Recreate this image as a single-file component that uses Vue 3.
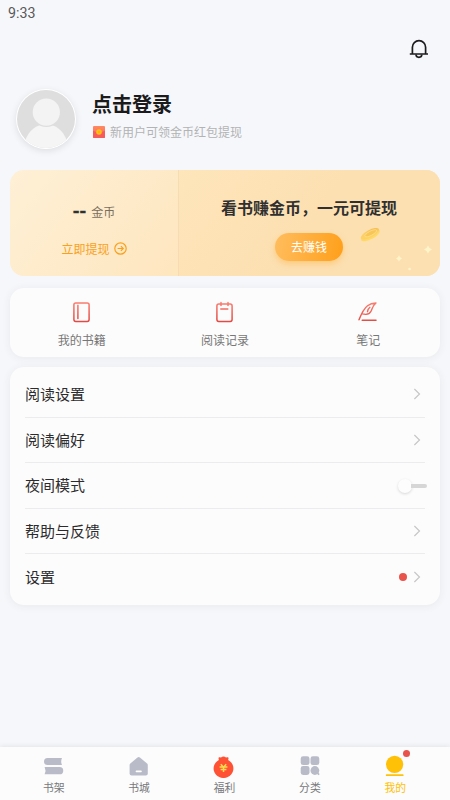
<script setup>
const shortcuts = [
  { label: '我的书籍', icon: 'book' },
  { label: '阅读记录', icon: 'record' },
  { label: '笔记', icon: 'note' },
]
const rows = [
  { label: '阅读设置' },
  { label: '阅读偏好' },
  { label: '夜间模式', toggle: true },
  { label: '帮助与反馈' },
  { label: '设置', dot: true },
]
const tabs = [
  { label: '书架', icon: 'shelf' },
  { label: '书城', icon: 'store' },
  { label: '福利', icon: 'bonus' },
  { label: '分类', icon: 'category' },
  { label: '我的', icon: 'mine', active: true },
]
</script>

<template>
  <div class="page">
    <svg class="defs" width="0" height="0">
      <defs>
        <linearGradient id="red" gradientUnits="userSpaceOnUse" x1="0" y1="0" x2="0" y2="22">
          <stop offset="0" stop-color="#fb8173" /><stop offset="1" stop-color="#e2463f" />
        </linearGradient>
        <linearGradient id="envelope" x1="0" y1="0" x2="0" y2="1">
          <stop offset="0" stop-color="#ff8a62" /><stop offset="1" stop-color="#fb5f5c" />
        </linearGradient>
        <linearGradient id="coin" x1="0" y1="1" x2="1" y2="0">
          <stop offset="0" stop-color="#ffd25c" /><stop offset="0.55" stop-color="#fbd06a" /><stop offset="1" stop-color="#f3b444" />
        </linearGradient>
      </defs>
    </svg>

    <div class="status">9:33</div>
    <div class="toolbar">
      <svg width="20" height="20" viewBox="0 0 20 20" fill="none" stroke="#1c1c1e" stroke-width="1.7">
        <path d="M3.400 15V8.300a6.600 6.600 0 0 1 13.200 0V15M.8 15h18.200" />
        <path d="M7 15.600a2.900 2.700 0 0 0 5.800 0" />
      </svg>
    </div>

    <header class="profile">
      <svg class="avatar" width="60" height="60" viewBox="0 0 60 60">
        <defs><clipPath id="face"><circle cx="30" cy="30" r="29" /></clipPath></defs>
        <circle cx="30" cy="30" r="30" fill="#fff" />
        <g clip-path="url(#face)">
          <rect width="60" height="60" fill="#dedede" />
          <path d="M9 52C13 41 20 35.5 30 35.5S47 41 51 52V60H9Z" fill="#f5f5f5" />
          <circle cx="30.3" cy="23.5" r="14.6" fill="#dedede" />
          <circle cx="30.3" cy="23.2" r="13.6" fill="#f3f3f3" />
        </g>
      </svg>
      <div class="who">
        <div class="name">点击登录</div>
        <div class="hint">
          <svg width="12" height="12" viewBox="0 0 12 12">
            <rect width="12" height="12" rx="1" fill="url(#envelope)" />
            <path d="M0 4.8Q6 8.4 12 4.8V11a1 1 0 0 1-1 1H1a1 1 0 0 1-1-1Z" fill="#f65b5a" />
            <circle cx="6" cy="6" r="2.8" fill="#ffc012" />
            <circle cx="6" cy="6" r="1.1" fill="#ffad0a" />
          </svg>
          <span>新用户可领金币红包提现</span>
        </div>
      </div>
    </header>

    <section class="coins">
      <div class="balance">
        <div class="amount"><b>--</b><span>金币</span></div>
        <div class="withdraw">
          <span>立即提现</span>
          <svg width="13" height="13" viewBox="0 0 13 13" fill="none" stroke="#f9a11d" stroke-width="1.2">
            <circle cx="6.5" cy="6.5" r="5.7" /><path d="M3.6 6.5h5.4M6.9 4.2l2.3 2.3-2.3 2.3" />
          </svg>
        </div>
      </div>
      <div class="promo">
        <div class="slogan">看书赚金币，一元可提现</div>
        <button class="earn">去赚钱</button>
        <svg class="sparkles" width="84" height="50" viewBox="0 0 84 50">
          <g transform="translate(15 9) rotate(-28)">
            <ellipse cx="-.2" cy="1.2" rx="10.5" ry="4.2" fill="#ffd966" />
            <ellipse cy="-.2" rx="10.2" ry="3.8" fill="url(#coin)" />
            <ellipse cx="1" cy="-.3" rx="6.5" ry="2.1" fill="#f8c557" stroke="#ffe294" stroke-width=".6" />
          </g>
          <g fill="#fff5c9">
            <path d="M73 20.500q1 3 4 4-3 1-4 4-1-3-4-4 3-1 4-4Z" />
            <path d="M44 30.500q.8 2.200 3 3-2.200.8-3 3-.8-2.200-3-3 2.200-.8 3-3Z" />
            <circle cx="54.6" cy="44" r="1.3" />
          </g>
        </svg>
      </div>
    </section>

    <section class="card shortcuts">
      <div v-for="s in shortcuts" :key="s.label" class="shortcut">
        <svg width="22" height="22" viewBox="0 0 22 22" fill="none" stroke="url(#red)" stroke-width="1.5" stroke-linecap="round" stroke-linejoin="round">
          <template v-if="s.icon === 'book'">
            <rect x="2.900" y="1.9" width="15.200" height="18.5" rx="1.8" />
            <path d="M6.900 4.2L6.910 17.5" />
          </template>
          <template v-else-if="s.icon === 'record'">
            <rect x="2.900" y="3.1" width="15.200" height="17.3" rx="1.8" />
            <path d="M7 1.6L7.010 4.400M14 1.6L14.010 4.400M6.800 7.9L13.800 7.910" />
          </template>
          <template v-else>
            <path d="M2 18.800C4.200 13.200 6.500 7.800 10.500 4.700C12.900 2.900 16 2.100 19 2C15.900 4.300 15.500 7.300 14 10.200C12.700 12.800 9.500 13.900 5.600 12.900M12.900 6.300C11.400 7.400 10.700 9 10.500 10.700" stroke-width="1.4" />
            <path d="M5.2 19.2L19 19.21" />
          </template>
        </svg>
        <span>{{ s.label }}</span>
      </div>
    </section>

    <section class="card list">
      <div v-for="r in rows" :key="r.label" class="row">
        <span class="label">{{ r.label }}</span>
        <span v-if="r.toggle" class="toggle"><i class="track"></i><i class="knob"></i></span>
        <span v-else class="end">
          <i v-if="r.dot" class="dot"></i>
          <svg width="8" height="12" viewBox="0 0 8 12" fill="none" stroke="#c6c6c8" stroke-width="1.2"><path d="M1.4 1l5.1 5-5.1 5" /></svg>
        </span>
      </div>
    </section>

    <nav class="tabs">
      <div v-for="t in tabs" :key="t.label" class="tab" :class="{ active: t.active }">
        <svg width="24" height="24" viewBox="0 0 24 24" fill="#b9bcc8">
          <template v-if="t.icon === 'shelf'">
            <path d="M5.500 4H20Q18.400 7.500 20 11H5.500A3.5 3.5 0 0 1 5.500 4Z" />
            <path d="M2.600 13H17.600A3.5 3.5 0 0 1 17.600 20.300H2.600Q4.400 16.600 2.600 13Z" />
          </template>
          <template v-else-if="t.icon === 'store'">
            <path d="M10.500 3.500a1.9 1.9 0 0 1 2.4 0l7.2 6.100a2 2 0 0 1 .7 1.5V19.500a2 2 0 0 1-2 2H4.600a2 2 0 0 1-2-2v-8.400a2 2 0 0 1 .7-1.5Z" />
            <rect x="8.600" y="16.600" width="6.200" height="1.6" rx=".8" fill="#fff" />
          </template>
          <template v-else-if="t.icon === 'bonus'">
            <path d="M6.500 4.200Q6.400 2.900 7.800 3.200L9 3.400Q11.500 1.600 14 3.400L15.400 3.200Q16.700 3 16.500 4.400L16.100 6.100A9.900 9.500 0 1 1 6.900 6.100Z" fill="#ff5235" />
            <path d="M8.800 10.200l2.700 3 2.700-3M11.500 13v5M7.600 12.900h7.800M8.600 15.500h5.800" stroke="#ffdb4d" stroke-width="1.5" fill="none" />
          </template>
          <template v-else-if="t.icon === 'category'">
            <rect x="2.700" y="2.300" width="8.800" height="8.800" rx="2.4" /><rect x="12.500" y="2.300" width="8.800" height="8.800" rx="2.4" />
            <rect x="2.700" y="12.100" width="8.800" height="8.800" rx="2.4" /><circle cx="16.900" cy="16.500" r="4.4" />
            <path d="M19 18.700l1.600 1.500" stroke="#b9bcc8" stroke-width="1.8" stroke-linecap="round" />
          </template>
          <template v-else>
            <circle cx="11.600" cy="10.400" r="8.600" fill="#ffc107" />
            <rect x="2.800" y="20.200" width="17.8" height="1.9" rx=".9" fill="#ffc107" />
          </template>
        </svg>
        <i v-if="t.active" class="badge"></i>
        <span>{{ t.label }}</span>
      </div>
    </nav>
  </div>
</template>

<style>
body { background: #f6f7fa; }
</style>

<style scoped>
.page {
  box-sizing: border-box;
  width: 450px;
  height: 800px;
  display: flex;
  flex-direction: column;
  background: #f6f7fa;
  font-family: 'Noto Sans CJK SC', sans-serif;
  overflow: hidden;
}
.page svg { display: block; flex: none; }
.page > .defs { position: absolute; }
.status { height: 26px; padding-left: 8px; line-height: 26px; font-family: Roboto, sans-serif; font-size: 14.2px; color: #58595b; }
.toolbar { height: 56px; padding: 13px 21px 0 0; box-sizing: border-box; display: flex; justify-content: flex-end; }
.profile { height: 88px; box-sizing: border-box; padding: 7px 0 0 16px; display: flex; gap: 16px; }
.avatar { border-radius: 50%; box-shadow: 0 2px 7px rgba(0, 0, 0, .1); }
.who { padding-top: 1px; }
.name { height: 28px; line-height: 28px; font-size: 20px; font-weight: 700; color: #1b1b1d; }
.hint { height: 28px; display: flex; align-items: center; gap: 5px; padding-left: 1px; font-size: 12px; color: #b2b3b5; }
.hint span { padding-bottom: 1px; }
.coins {
  flex: none;
  height: 106px;
  margin: 0 10px;
  border-radius: 14px;
  display: flex;
  background: linear-gradient(128deg, #fef0d6 0%, #fee6bf 48%, #fce0b2 60%, #fce0b2 100%);
  overflow: hidden;
}
.balance { box-sizing: border-box; width: 168px; padding-top: 30px; display: flex; flex-direction: column; align-items: center; }
.amount { height: 23px; display: flex; align-items: center; gap: 5px; font-size: 12px; color: #7a6f5f; }
.amount b { font-size: 18px; line-height: 23px; color: #303030; padding-bottom: 4px; -webkit-text-stroke: .5px #303030; }
.withdraw { margin-top: 14px; height: 22px; display: flex; align-items: center; gap: 4px; font-size: 12px; color: #f9a11d; }
.promo {
  position: relative;
  flex: 1;
  display: flex;
  flex-direction: column;
  align-items: center;
  padding-top: 25px;
  box-shadow: inset 1px 0 #f5dcb2;
  background: linear-gradient(128deg, #fee5ba 0%, #fce0b2 50%);
}
.slogan { height: 24px; line-height: 24px; font-size: 16px; font-weight: 700; color: #303030; }
.earn {
  margin-top: 14px;
  width: 68px;
  height: 28px;
  padding: 0 0 1px;
  border: 0;
  border-radius: 14px;
  font: 400 12px/27px 'Noto Sans CJK SC', sans-serif;
  color: #fff;
  background: linear-gradient(100deg, #ffbd5e, #ff9f1a);
  box-shadow: 0 3px 6px rgba(255, 166, 40, .38);
}
.sparkles { position: absolute; right: 1px; bottom: 1px; }
.card { flex: none; margin: 0 10px; background: #fcfcfc; border-radius: 14px; box-shadow: 0 1px 8px rgba(40, 50, 70, .07); }
.shortcuts { margin-top: 12px; height: 69px; display: grid; grid-template-columns: repeat(3, 1fr); }
.shortcut { display: flex; flex-direction: column; align-items: center; padding-top: 13px; font-size: 12px; line-height: 20px; color: #777; }
.shortcut span { margin-top: 7px; }
.list { margin-top: 10px; height: 238px; box-sizing: border-box; padding: 5px 15px 0; }
.row { height: 45.5px; box-sizing: border-box; display: flex; align-items: center; justify-content: space-between; border-bottom: 1px solid #ececee; font-size: 15px; color: #2c2c2e; }
.row:last-child { border-bottom: 0; }
.label { padding-bottom: 1px; }
.end { display: flex; align-items: center; gap: 6px; padding-right: 4px; }
.dot { width: 8px; height: 8px; border-radius: 50%; background: #e8534b; }
.toggle { display: flex; align-items: center; flex-direction: row-reverse; margin-right: -2px; padding-top: 1px; }
.track { width: 16px; height: 4px; border-radius: 0 2px 2px 0; background: #d6d6d7; }
.knob { width: 14px; height: 14px; border-radius: 50%; background: #fdfdfd; box-shadow: 0 1px 3px rgba(0, 0, 0, .15); margin-right: -1px; }
.tabs {
  flex: none;
  height: 53px;
  margin-top: auto;
  padding: 0 12px 0 11px;
  box-sizing: border-box;
  display: grid;
  grid-template-columns: repeat(5, 1fr);
  background: #fcfcfc;
  box-shadow: 0 -1px 5px rgba(0, 0, 0, .08);
}
.tab { position: relative; display: flex; flex-direction: column; align-items: center; padding-top: 7px; font-size: 10.8px; line-height: 16px; color: #77787b; }
.tab span { margin-top: 1px; }
.tab.active { color: #ffc107; }
.badge { position: absolute; left: 50%; top: 3px; margin-left: 8px; width: 7px; height: 7px; border-radius: 50%; background: #e8534b; }
</style>
